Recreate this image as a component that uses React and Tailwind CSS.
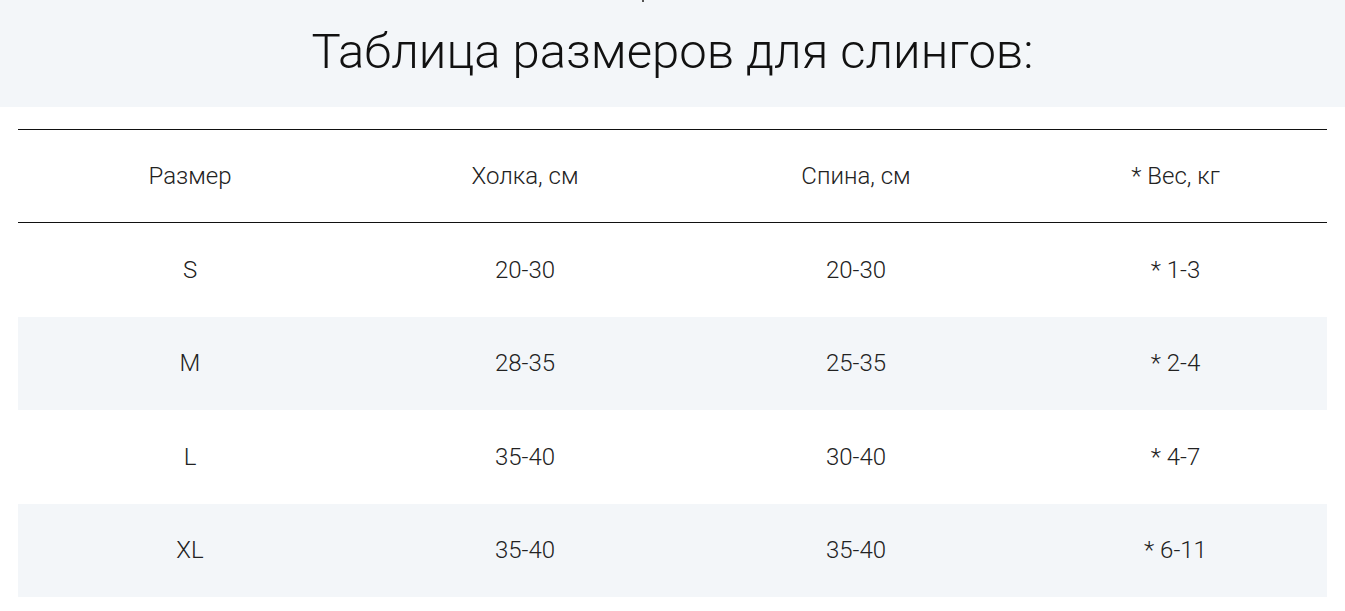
const rows = [
  { size: 'S', withers: '20-30', back: '20-30', weight: '* 1-3', shaded: false },
  { size: 'M', withers: '28-35', back: '25-35', weight: '* 2-4', shaded: true },
  { size: 'L', withers: '35-40', back: '30-40', weight: '* 4-7', shaded: false },
  { size: 'XL', withers: '35-40', back: '35-40', weight: '* 6-11', shaded: true },
];

const cols = 'grid grid-cols-[344fr_326fr_336fr_303fr]';

export default function App() {
  return (
    <div className="min-h-screen bg-white font-['Roboto',sans-serif] font-light text-[#222]">
      {/* Title band */}
      <div className="relative bg-[#f3f6f9] h-[107px] flex items-center justify-center">
        <div className="absolute left-[642px] top-0 w-[2px] h-[2px] bg-[#555]" />
        <h1 className="text-[49px] leading-none text-[#111] font-light -mt-[4px]">Таблица размеров для слингов:</h1>
      </div>

      {/* Size table */}
      <div className="mx-[18px] mt-[22px]">
        <div className={`${cols} h-[94px] items-center border-t border-b border-[#111] text-[24px]`}>
          <div className="text-center">Размер</div>
          <div className="text-center">Холка, см</div>
          <div className="text-center">Спина, см</div>
          <div className="text-center">* Вес, кг</div>
        </div>
        {rows.map((r) => (
          <div
            key={r.size}
            className={`${cols} h-[93.5px] items-center text-[24px] ${r.shaded ? 'bg-[#f3f6f9]' : 'bg-white'}`}
          >
            <div className="text-center">{r.size}</div>
            <div className="text-center">{r.withers}</div>
            <div className="text-center">{r.back}</div>
            <div className="text-center">{r.weight}</div>
          </div>
        ))}
      </div>
    </div>
  );
}
